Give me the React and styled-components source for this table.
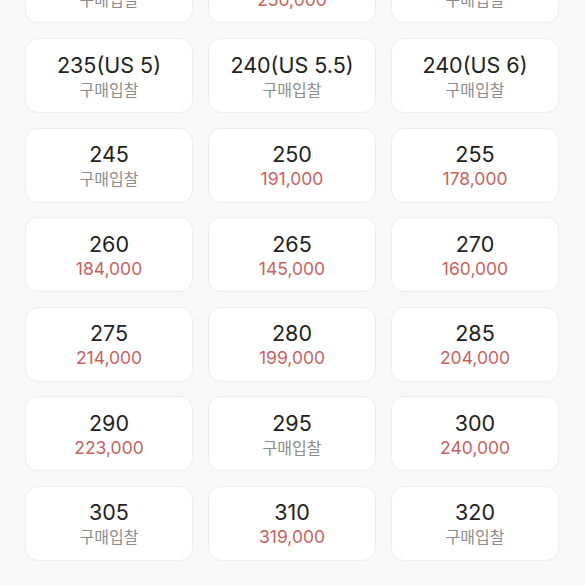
import * as React from "react";
import styled, { createGlobalStyle } from "styled-components";

const sizes = [
  { id: 1, size: "230", price: null },
  { id: 2, size: "230(US 4.5)", price: "250,000" },
  { id: 3, size: "235", price: null },
  { id: 4, size: "235(US 5)", price: null },
  { id: 5, size: "240(US 5.5)", price: null },
  { id: 6, size: "240(US 6)", price: null },
  { id: 7, size: "245", price: null },
  { id: 8, size: "250", price: "191,000" },
  { id: 9, size: "255", price: "178,000" },
  { id: 10, size: "260", price: "184,000" },
  { id: 11, size: "265", price: "145,000" },
  { id: 12, size: "270", price: "160,000" },
  { id: 13, size: "275", price: "214,000" },
  { id: 14, size: "280", price: "199,000" },
  { id: 15, size: "285", price: "204,000" },
  { id: 16, size: "290", price: "223,000" },
  { id: 17, size: "295", price: null },
  { id: 18, size: "300", price: "240,000" },
  { id: 19, size: "305", price: null },
  { id: 20, size: "310", price: "319,000" },
  { id: 21, size: "320", price: null },
];

const GlobalStyle = createGlobalStyle`
  html, body {
    margin: 0;
    padding: 0;
    background: #f8f8f8;
    overflow: hidden;
  }
  body {
    font-family: Inter, "Noto Sans CJK KR", sans-serif;
    -webkit-font-smoothing: antialiased;
  }
`;

export default function App() {
  return (
    <>
      <GlobalStyle />
      <SizeSheet>
        <SizeGrid>
          {sizes.map((item) => (
            <SizeCard key={item.id}>
              <SizeLabel>{item.size}</SizeLabel>
              <PriceLabel $hasPrice={!!item.price}>
                {item.price || "구매입찰"}
              </PriceLabel>
            </SizeCard>
          ))}
        </SizeGrid>
      </SizeSheet>
    </>
  );
}

const SizeSheet = styled.main`
  height: 585px;
  overflow: hidden;
  background: #f8f8f8;
`;

const SizeGrid = styled.div`
  display: grid;
  grid-template-columns: repeat(3, 168px);
  column-gap: 15px;
  row-gap: 14.6px;
  padding: 0 26px 0 25px;
  margin-top: -51.6px;
`;

const SizeCard = styled.button`
  height: 75px;
  box-sizing: border-box;
  display: flex;
  flex-direction: column;
  align-items: center;
  justify-content: center;
  padding: 2px 0 0;
  background: #ffffff;
  border: 1px solid #ececec;
  border-radius: 13px;
  font-family: inherit;
`;

const SizeLabel = styled.span`
  font-size: 21.5px;
  line-height: 26px;
  color: #222222;
`;

const PriceLabel = styled.span`
  font-size: ${(p) => (p.$hasPrice ? "17.5px" : "16px")};
  line-height: 24px;
  color: ${(p) => (p.$hasPrice ? "#c8625f" : "#8c8c8c")};
`;
